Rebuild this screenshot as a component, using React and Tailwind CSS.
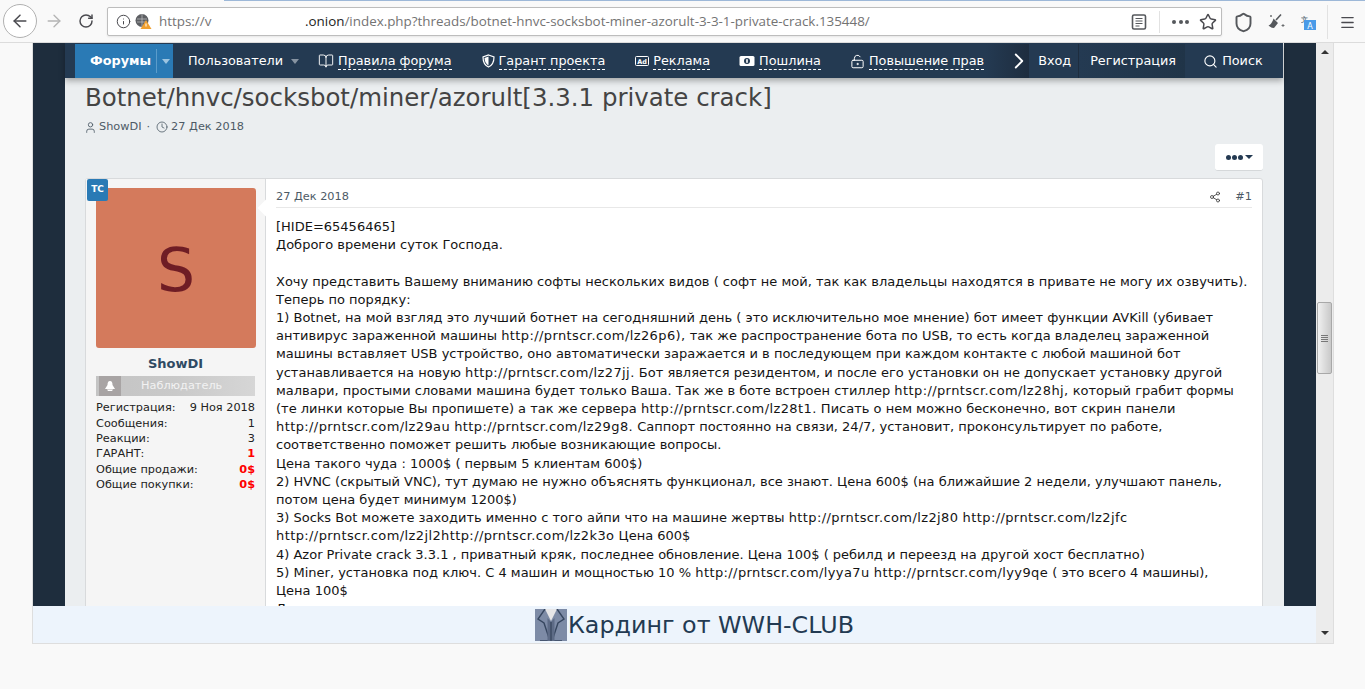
import React from "react";
import {
  ArrowLeft,
  ArrowRight,
  RotateCw,
  Info,
  BookOpen,
  Search,
  Star,
  Shield,
  ChevronRight,
  User,
  Clock,
  Share2,
  LockKeyholeOpen,
  Menu,
} from "lucide-react";

const bodyLines = [
  "[HIDE=65456465]",
  "Доброго времени суток Господа.",
  "\u00a0",
  "Хочу представить Вашему вниманию софты нескольких видов ( софт не мой, так как владельцы находятся в привате не могу их озвучить).",
  "Теперь по порядку:",
  "1) Botnet, на мой взгляд это лучший ботнет на сегодняшний день ( это исключительно мое мнение) бот имеет функции AVKill (убивает",
  "антивирус зараженной машины http://prntscr.com/lz26p6), так же распространение бота по USB, то есть когда владелец зараженной",
  "машины вставляет USB устройство, оно автоматически заражается и в последующем при каждом контакте с любой машиной бот",
  "устанавливается на новую http://prntscr.com/lz27jj. Бот является резидентом, и после его установки он не допускает установку другой",
  "малвари, простыми словами машина будет только Ваша. Так же в боте встроен стиллер http://prntscr.com/lz28hj, который грабит формы",
  "(те линки которые Вы пропишете) а так же сервера http://prntscr.com/lz28t1. Писать о нем можно бесконечно, вот скрин панели",
  "http://prntscr.com/lz29au http://prntscr.com/lz29g8. Саппорт постоянно на связи, 24/7, установит, проконсультирует по работе,",
  "соответственно поможет решить любые возникающие вопросы.",
  "Цена такого чуда : 1000$ ( первым 5 клиентам 600$)",
  "2) HVNC (скрытый VNC), тут думаю не нужно объяснять функционал, все знают. Цена 600$ (на ближайшие 2 недели, улучшают панель,",
  "потом цена будет минимум 1200$)",
  "3) Socks Bot можете заходить именно с того айпи что на машине жертвы http://prntscr.com/lz2j80 http://prntscr.com/lz2jfc",
  "http://prntscr.com/lz2jl2http://prntscr.com/lz2k3o Цена 600$",
  "4) Azor Private crack 3.3.1 , приватный кряк, последнее обновление. Цена 100$ ( ребилд и переезд на другой хост бесплатно)",
  "5) Miner, установка под ключ. С 4 машин и мощностью 10 % http://prntscr.com/lyya7u http://prntscr.com/lyy9qe ( это всего 4 машины),",
  "Цена 100$",
  "Д",
];

const stats = [
  ["Регистрация:", "9 Ноя 2018", false, "h-[15px]"],
  ["Сообщения:", "1", false, "h-[16px]"],
  ["Реакции:", "3", false, "h-[15px]"],
  ["ГАРАНТ:", "1", true, "h-[15px]"],
  ["Общие продажи:", "0$", true, "h-[16px]"],
  ["Общие покупки:", "0$", true, "h-[15px]"],
];

// links render a bit wider than the rest of the text in the reference
function BodyLine({ text }) {
  const parts = text.split(/(\S*http:\/\/\S+)/);
  return (
    <div>
      {parts.map((part, i) =>
        part.includes("http://") ? (
          <span key={i} className="tracking-[0.4px]">{part}</span>
        ) : (
          part
        )
      )}
    </div>
  );
}

function AdIcon() {
  return (
    <svg width="14" height="12" viewBox="0 0 14 12" className="shrink-0">
      <rect x="0.5" y="1.5" width="13" height="9" rx="1" fill="none" stroke="#fff" />
      <text x="7" y="8.5" textAnchor="middle" fontSize="6.5" fontWeight="700" fill="#fff">
        Ad
      </text>
    </svg>
  );
}

function MoneyIcon() {
  return (
    <svg width="16" height="12" viewBox="0 0 16 12" className="shrink-0">
      <rect x="0.5" y="1" width="15" height="10" rx="1.5" fill="#fff" />
      <circle cx="8" cy="6" r="3" fill="#243a52" />
      <rect x="7.2" y="4.2" width="1.6" height="3.6" fill="#fff" />
    </svg>
  );
}

function ShieldNavIcon() {
  return (
    <svg width="13" height="14" viewBox="0 0 13 14" className="shrink-0">
      <path d="M6.5 1 L12 3 C12 8 10 11.5 6.5 13 C3 11.5 1 8 1 3 Z" fill="none" stroke="#fff" strokeWidth="1.2" />
      <path d="M6.5 2.5 L6.5 11.5 C4 10.2 2.6 7.5 2.5 4 Z" fill="#fff" />
    </svg>
  );
}

function NavLink({ icon, children, className }) {
  return (
    <div className={`flex items-center gap-[4px] shrink-0 ${className}`}>
      {icon}
      <span className="border-b border-dashed border-white leading-[16px] text-white">{children}</span>
    </div>
  );
}

function SiteIdentity() {
  return (
    <svg width="17" height="17" viewBox="0 0 17 17" className="ml-[4px] shrink-0">
      <circle cx="7" cy="7.5" r="6.5" fill="#5d5f63" />
      <path d="M2 6 H12 M2 9 H12 M7 1 V14" stroke="#c5c7c9" strokeWidth="0.7" />
      <path d="M11 7 L16.5 16 H5.5 Z" fill="#f0a030" />
      <rect x="10.5" y="10.5" width="1" height="3" fill="#fff" />
    </svg>
  );
}

function TranslateIcon() {
  return (
    <svg width="15" height="15" viewBox="0 0 15 15" className="shrink-0">
      <text x="0" y="7" fontSize="7" fontWeight="700" fill="#6d7a86">
        文
      </text>
      <rect x="3" y="5" width="12" height="10" fill="#4a9be8" />
      <text x="9" y="13.5" textAnchor="middle" fontSize="8" fill="#fff">
        A
      </text>
    </svg>
  );
}

function BroomIcon() {
  return (
    <svg width="17" height="17" viewBox="0 0 17 17" className="shrink-0">
      <path d="M13 1.5 L8 7" stroke="#55585c" strokeWidth="1.6" />
      <path d="M5.5 5.5 L10 10 L6 15 C4 15 2 14 0.5 12.5 C3 11.5 4.5 9 5.5 5.5 Z" fill="#55585c" />
      <path d="M15 11v3M13.5 12.5h3M3 2v2M2 3h2" stroke="#55585c" strokeWidth="0.8" />
    </svg>
  );
}

function SuitIcon() {
  return (
    <svg width="32" height="32" viewBox="0 0 32 32" className="shrink-0">
      <rect width="32" height="32" fill="#7d8ba6" />
      <path d="M10 0 H22 L16 12 Z" fill="#e6e6e8" />
      <path d="M10 0 L3 10 L9 14 L15 32 H5 M22 0 L29 10 L23 14 L17 32 H27" fill="none" stroke="#36465f" strokeWidth="1.4" />
      <path d="M12.5 9 L16 13 L19.5 9 V32 H12.5 Z" fill="#5d6b86" />
      <path d="M16 13 V32" stroke="#2f3c52" strokeWidth="1" />
    </svg>
  );
}

export default function App() {
  return (
    <div className="h-[689px] w-[1365px] overflow-hidden bg-[#f9f9f9] font-['DejaVu_Sans',sans-serif]">
      {/* browser toolbar */}
      <div className="relative flex h-[43px] items-center border-b border-[#dcdcdc] bg-[#f9f9f9]">
        <div className="absolute left-[224px] right-0 top-0 h-px bg-[#9db8d8]"></div>
        <div className="ml-[3px] flex h-[34px] w-[34px] items-center justify-center rounded-full border border-[#b1b1b1] bg-white">
          <ArrowLeft size={20} strokeWidth={1.8} color="#4a4a4f" />
        </div>
        <ArrowRight size={20} strokeWidth={1.6} color="#b4b4b4" className="ml-[7px]" />
        <RotateCw size={16} strokeWidth={2.2} color="#4a4a4f" className="ml-[14px]" />
        <div className="ml-[13px] flex h-[29px] w-[1115px] items-center rounded-[2px] border border-[#bdbdbd] bg-white font-['Open_Sans',sans-serif] text-[13.4px] text-[#737373] shadow-[0_1px_2px_rgba(0,0,0,0.08)]">
          <Info size={15} strokeWidth={1.6} color="#4a4a4f" className="ml-[8px] shrink-0" />
          <SiteIdentity />
          <span className="ml-[7px] w-[146px] shrink-0">https://v</span>
          <span className="text-[#222]">.onion</span>
          <span>/index.php?threads/botnet-hnvc-socksbot-miner-azorult-3-3-1-private-crack.135448/</span>
          <svg width="16" height="16" viewBox="0 0 16 16" className="absolute left-[1131px] top-[14px]">
            <rect x="1.5" y="1" width="13" height="14" rx="1.5" fill="none" stroke="#55585c" strokeWidth="1.6" />
            <path d="M4.5 4.5h7M4.5 7h7M4.5 9.5h7M4.5 12h4" stroke="#55585c" />
          </svg>
          <div className="absolute left-[1159px] top-[11px] h-[22px] w-px bg-[#e2e2e2]"></div>
          <div className="absolute left-[1172px] top-[20px] flex gap-[2.5px]">
            <span className="h-[4px] w-[4px] rounded-full bg-[#55585c]"></span>
            <span className="h-[4px] w-[4px] rounded-full bg-[#55585c]"></span>
            <span className="h-[4px] w-[4px] rounded-full bg-[#55585c]"></span>
          </div>
          <Star size={18} strokeWidth={2} color="#4a4a4f" className="absolute left-[1199px] top-[13px]" />
        </div>
        <Shield size={21} strokeWidth={2.2} color="#55585c" className="absolute left-[1233px] top-[12px]" />
        <div className="absolute left-[1268px] top-[13px]"><BroomIcon /></div>
        <div className="absolute left-[1301px] top-[15px]"><TranslateIcon /></div>
        <div className="absolute left-[1327px] top-[5px] h-[34px] w-px bg-[#e2e2e2]"></div>
        <Menu size={17} strokeWidth={1.8} color="#4a4a4f" className="absolute left-[1339px] top-[14px]" />
      </div>

      <div className="ml-[32px] flex h-[601px] w-[1302px] border-b border-l border-r border-[#dedede]">
        <div className="flex w-[1283px] shrink-0 flex-col">
          {/* scrolling page */}
          <div className="h-[563px] overflow-hidden bg-[#1e2d3d] pl-[32px]">
            <div className="h-full w-[1219px] bg-[#ebeef0]">
              {/* site nav */}
              <div className="relative z-10 flex h-[35px] w-[1218px] items-center bg-[#243a52] pl-[10px] pt-[1px] text-[12.8px] text-white shadow-[0_3px_6px_rgba(0,0,0,0.3)]">
                <div className="flex h-full w-[98px] shrink-0 items-center bg-[#2a7ab5] pl-[15px] font-bold">
                  <span>Форумы</span>
                  <span className="ml-[5px] h-[24px] w-px bg-[#5b9ccb]"></span>
                  <span className="ml-[5px] h-0 w-0 border-x-[4px] border-t-[5px] border-x-transparent border-t-[#9cc4e0]"></span>
                </div>
                <span className="ml-[15px] shrink-0">Пользователи</span>
                <span className="ml-[8px] h-0 w-0 shrink-0 border-x-[4.5px] border-t-[5px] border-x-transparent border-t-[#8793a1]"></span>
                <NavLink className="ml-[19px]" icon={<BookOpen size={16} strokeWidth={1.4} color="#fff" />}>
                  Правила форума
                </NavLink>
                <NavLink className="ml-[30px]" icon={<ShieldNavIcon />}>Гарант проекта</NavLink>
                <NavLink className="ml-[30px]" icon={<AdIcon />}>Реклама</NavLink>
                <NavLink className="ml-[29px]" icon={<MoneyIcon />}>Пошлина</NavLink>
                <NavLink className="ml-[29px]" icon={<LockKeyholeOpen size={15} strokeWidth={1.6} color="#fff" />}>
                  Повышение прав
                </NavLink>
                <div className="ml-[2px] flex h-full w-[43px] shrink-0 items-center justify-end bg-gradient-to-r from-[#243a52] to-[#1e2d3f]">
                  <ChevronRight size={26} strokeWidth={1.7} color="#fff" className="-mr-[3px]" />
                </div>
                <div className="flex h-full w-[50px] shrink-0 items-center border-r border-[#1e2d3f] pl-[9px]">Вход</div>
                <div className="flex h-full w-[106px] shrink-0 items-center bg-gradient-to-r from-[#243a52] to-[#203448] pl-[11px]">Регистрация</div>
                <div className="flex h-full grow items-center gap-[4px] pl-[18px]">
                  <Search size={15} strokeWidth={1.8} color="#fff" />
                  <span>Поиск</span>
                </div>
              </div>

              <div className="pl-[20px] pr-[21px]">
                {/* thread header */}
                <h1 className="mt-[5px] text-[24.46px] leading-[30px] text-[#444]">
                  Botnet/hnvc/socksbot/miner/azorult[3.3.1 private crack]
                </h1>
                <div className="mt-[6px] flex h-[16px] items-center text-[11.3px] text-[#4d5a66]">
                  <User size={13} strokeWidth={1.6} className="-ml-[1px]" />
                  <span className="ml-[2px]">ShowDI</span>
                  <span className="ml-[5px] mr-[6px]">·</span>
                  <Clock size={12} strokeWidth={1.6} />
                  <span className="ml-[3px]">27 Дек 2018</span>
                </div>
                <div className="mt-[9px] flex justify-end">
                  <div className="flex h-[27px] w-[48px] items-center justify-center gap-[1px] rounded-[3px] border-b border-[#d5d8da] bg-white">
                    <span className="h-[5px] w-[5px] rounded-full bg-[#243a52]"></span>
                    <span className="h-[5px] w-[5px] rounded-full bg-[#243a52]"></span>
                    <span className="h-[5px] w-[5px] rounded-full bg-[#243a52]"></span>
                    <span className="ml-[1px] h-0 w-0 border-x-[4px] border-t-[4px] border-x-transparent border-t-[#243a52]"></span>
                  </div>
                </div>

                {/* post */}
                <div className="mt-[7px] flex h-[500px] rounded-[3px] border border-[#d8dadc] bg-white">
                  <div className="relative w-[180px] shrink-0 border-r border-[#d8dadc] bg-[#f5f5f5] px-[10px] pt-[9px]">
                    <div className="absolute left-[1px] top-0 flex h-[22px] w-[21px] items-center justify-center rounded-[2px] bg-[#2a7ab5] text-[9px] font-bold text-white">
                      TC
                    </div>
                    <div className="flex h-[160px] w-[160px] items-center justify-center rounded-[3px] bg-[#d47a5c] pt-[4px] text-[60px] text-[#6f1d25]">
                      S
                    </div>
                    <div className="mt-[8px] text-center text-[13px] font-bold leading-[16px] text-[#2f4a63]">ShowDI</div>
                    <div className="mt-[4px] flex h-[20px] w-[159px] items-center bg-gradient-to-r from-[#c4c4c4] via-[#c9c9c9] to-[#d6d6d6]">
                      <div className="ml-[3px] flex h-full w-[22px] items-center justify-center bg-[#a8a4a4]">
                        <svg width="12" height="12" viewBox="0 0 12 12">
                          <path d="M6 1 C8 1 8.5 3 8.5 5 L11 9 L1 9 L3.5 5 C3.5 3 4 1 6 1 Z M3 9.5 H9 L8 11 H4 Z" fill="#fff" />
                        </svg>
                      </div>
                      <span className="ml-[20px] text-[11.3px] text-[#f2f2f2]">Наблюдатель</span>
                    </div>
                    <div className="mt-[5px] w-[159px] text-[11.3px] text-[#222]">
                      {stats.map(([label, value, red, height]) => (
                        <div key={label} className={`flex items-center justify-between ${height}`}>
                          <span>{label}</span>
                          <span className={red ? "font-bold text-[#f00]" : ""}>{value}</span>
                        </div>
                      ))}
                    </div>
                  </div>

                  <div className="relative grow px-[10px]">
                    <div className="absolute -left-[6px] top-[23px] h-[12px] w-[12px] rotate-45 bg-white"></div>
                    <div className="flex h-[29px] items-center justify-between border-b border-[#e8e8e8] pt-[8px] text-[11.3px] text-[#4d5a66]">
                      <span>27 Дек 2018</span>
                      <div className="flex items-center gap-[14px]">
                        <Share2 size={12} strokeWidth={1.6} color="#333" />
                        <span>#1</span>
                      </div>
                    </div>
                    <div className="mt-[10px] whitespace-nowrap text-[13px] leading-[18.2px] text-[#141414]">
                      {bodyLines.map((line, i) => (
                        <BodyLine key={i} text={line} />
                      ))}
                    </div>
                  </div>
                </div>
              </div>
            </div>
          </div>

          {/* bottom ad bar */}
          <div className="flex h-[37px] items-center justify-center bg-[#edf4fc] pl-[40px]">
            <SuitIcon />
            <span className="ml-[1px] text-[23.8px] leading-[32px] text-[#233a52]">Кардинг от WWH-CLUB</span>
          </div>
        </div>

        {/* page scrollbar */}
        <div className="flex w-[17px] flex-col items-center bg-[#ececec]">
          <span className="mt-[7px] h-0 w-0 border-x-[4px] border-b-[4px] border-x-transparent border-b-[#333]"></span>
          <div className="mt-[248px] flex h-[72px] w-[15px] items-center justify-center rounded-[2px] border border-[#a8a8a8] bg-gradient-to-r from-[#f0f0f0] via-[#dcdcdc] to-[#c9c9c9]">
            <div className="flex w-[7px] flex-col gap-[1px]">
              <span className="h-px bg-[#777]"></span>
              <span className="h-px bg-[#777]"></span>
              <span className="h-px bg-[#777]"></span>
              <span className="h-px bg-[#777]"></span>
            </div>
          </div>
          <span className="mt-[257px] h-0 w-0 border-x-[4px] border-t-[4px] border-x-transparent border-t-[#333]"></span>
        </div>
      </div>
    </div>
  );
}
